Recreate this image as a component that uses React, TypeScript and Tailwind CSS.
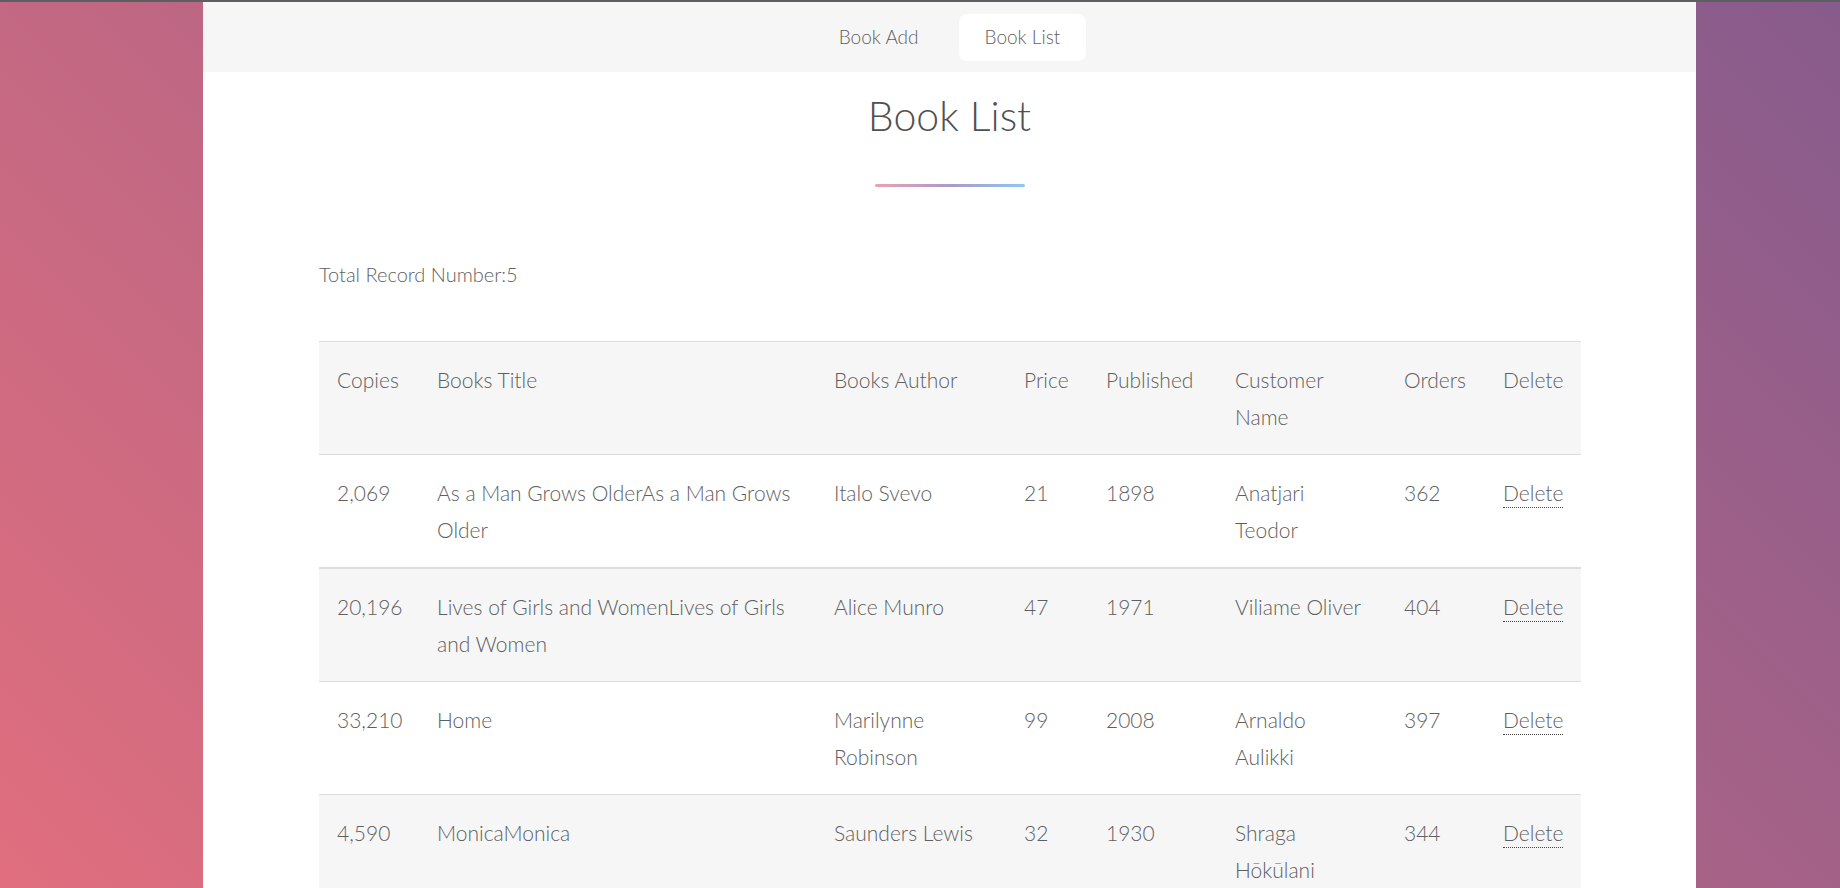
import React from 'react';

interface Book {
  copies: string;
  title: string;
  author: string;
  price: number;
  published: number;
  customer: string;
  orders: number;
}

const books: Book[] = [
  { copies: '2,069', title: 'As a Man Grows OlderAs a Man Grows Older', author: 'Italo Svevo', price: 21, published: 1898, customer: 'Anatjari Teodor', orders: 362 },
  { copies: '20,196', title: 'Lives of Girls and WomenLives of Girls and Women', author: 'Alice Munro', price: 47, published: 1971, customer: 'Viliame Oliver', orders: 404 },
  { copies: '33,210', title: 'Home', author: 'Marilynne Robinson', price: 99, published: 2008, customer: 'Arnaldo Aulikki', orders: 397 },
  { copies: '4,590', title: 'MonicaMonica', author: 'Saunders Lewis', price: 32, published: 1930, customer: 'Shraga Hōkūlani', orders: 344 },
  { copies: '12,874', title: 'The Leopard', author: 'Giuseppe Tomasi di Lampedusa', price: 58, published: 1958, customer: 'Mirela Kaspar', orders: 215 },
];

const headers = ['Copies', 'Books Title', 'Books Author', 'Price', 'Published', 'Customer Name', 'Orders', 'Delete'];
const widths = ['w-[100px]', 'w-[397px]', 'w-[190px]', 'w-[82px]', 'w-[129px]', 'w-[169px]', 'w-[99px]', 'w-[96px]'];

function NavBar() {
  return (
    <nav className="h-[70px] bg-[#f6f6f6] flex items-center justify-center gap-[14px]">
      <a className="px-[26px] h-[47px] flex items-center rounded-lg text-[19px] text-[#5f5f5f]">Book Add</a>
      <a className="px-[26px] h-[47px] flex items-center rounded-lg bg-white text-[19px] text-[#5f5f5f]">Book List</a>
    </nav>
  );
}

export default function App() {
  return (
    <div className="h-screen overflow-hidden bg-[linear-gradient(45deg,#e06e7e,#875b8c)] font-['Lato','Liberation_Sans',sans-serif] font-light text-[#5f5f5f]">
      <div className="h-[2px] bg-[#5e5e62]" />
      <main className="ml-[203px] w-[1493px] bg-white min-h-full">
        <NavBar />
        <section className="px-[116px] pb-16">
          <h1 className="pt-[16px] text-center text-[41px] leading-[56px] text-[#505050]">Book List</h1>
          <div className="mx-auto mt-[40px] w-[150px] h-[3px] rounded-full bg-[linear-gradient(to_right,#eea2b0,#a99bc8,#8ec8f0)]" />
          <p className="mt-[73px] text-[20px] leading-[28px]">Total Record Number:5</p>
          <table className="mt-[53px] w-[1262px] table-fixed border-collapse text-[21px] leading-[37px]">
            <colgroup>
              {widths.map((w, i) => (
                <col key={i} className={w} />
              ))}
            </colgroup>
            <thead>
              <tr className="bg-[#f6f6f6] border-t border-[#dcdcdc]">
                {headers.map((h) => (
                  <th key={h} className="px-[18px] py-[19px] text-left align-top font-light">
                    {h}
                  </th>
                ))}
              </tr>
            </thead>
            <tbody>
              {books.map((b, i) => (
                <tr
                  key={b.copies}
                  className={`${i % 2 === 1 ? 'bg-[#f6f6f6]' : 'bg-white'} ${i === 1 ? 'border-t-2' : 'border-t'} border-[#dcdcdc]`}
                >
                  <td className="px-[18px] py-[19px] align-top">{b.copies}</td>
                  <td className="px-[18px] py-[19px] align-top">{b.title}</td>
                  <td className="px-[18px] py-[19px] align-top">{b.author}</td>
                  <td className="px-[18px] py-[19px] align-top">{b.price}</td>
                  <td className="px-[18px] py-[19px] align-top">{b.published}</td>
                  <td className="px-[18px] py-[19px] align-top">{b.customer}</td>
                  <td className="px-[18px] py-[19px] align-top">{b.orders}</td>
                  <td className="px-[18px] py-[19px] align-top">
                    <a className="border-b border-dotted border-[#444] pb-[2px] cursor-pointer">Delete</a>
                  </td>
                </tr>
              ))}
            </tbody>
          </table>
        </section>
      </main>
    </div>
  );
}
